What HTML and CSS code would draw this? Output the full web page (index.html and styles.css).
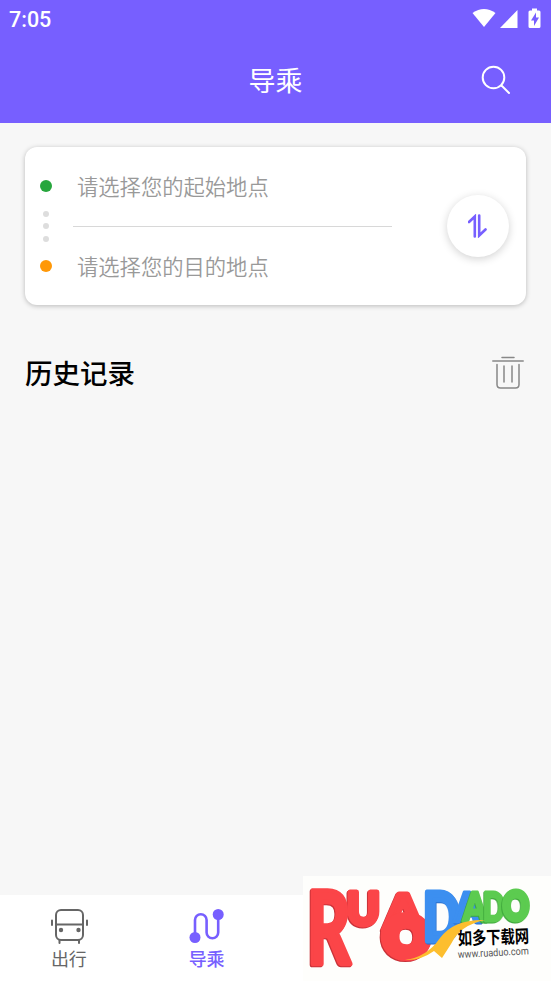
FILE: index.html
```html
<!DOCTYPE html>
<html lang="zh-CN">

<head>
  <meta charset="utf-8">
  <title>导乘</title>
  <link rel="stylesheet" href="styles.css">
</head>

<body>
  <header>
    <div class="status">
      <span>7:05</span>
      <svg class="status-icons" width="70" height="22" viewBox="0 0 70 22">
        <path d="M0.500 5Q12-3 23.500 5L12 19Z" />
        <path d="M45.500 2V20H28Z" />
        <path d="M60 0.500h5v2h2q1.500 0 1.500 1.500v14.500q0 1.500-1.500 1.500h-9q-1.500 0-1.500-1.500V4q0-1.500 1.500-1.500h2z" />
        <path class="bolt" d="M64 4.500l-5 8h3v5.500l5-8.500h-3z" />
      </svg>
    </div>
    <div class="title-bar">
      <h1>导乘</h1>
      <svg class="search" width="30" height="30" viewBox="0 0 30 30">
        <circle cx="12.500" cy="12.500" r="10.800" />
        <path d="M20.500 20.500l7.500 7.500" />
      </svg>
    </div>
  </header>

  <main>
    <form class="card">
      <div class="marks">
        <i class="dot start"></i>
        <i class="small"></i>
        <i class="small"></i>
        <i class="small"></i>
        <i class="dot end"></i>
      </div>
      <div class="places">
        <div class="place">请选择您的起始地点</div>
        <div class="place">请选择您的目的地点</div>
      </div>
      <button type="button" class="swap">
        <svg width="20" height="24" viewBox="0 0 20 24">
          <path d="M1 8L6.800 2.500v20M11.200 1.500v20L17.500 15.500" />
        </svg>
      </button>
    </form>

    <div class="history">
      <h2>历史记录</h2>
      <svg class="trash" width="32" height="34" viewBox="0 0 32 34">
        <path d="M10 1.500h12M0.800 5h30.400M5 8.500v20q0 3.500 3.500 3.500h15q3.500 0 3.500-3.500v-20M12 10v16M20 10v16" />
      </svg>
    </div>
  </main>

  <nav>
    <a class="tab">
      <svg width="38" height="36" viewBox="0 0 38 36">
        <rect x="6" y="2" width="27" height="30" rx="5" />
        <path d="M6 16.500h27M2 12.500v4.500M37 12.500v4.500M9.500 32v3M29 32v3" />
        <circle class="fill" cx="11" cy="22" r="2.200" />
        <circle class="fill" cx="28.500" cy="22" r="2.200" />
      </svg>
      <span>出行</span>
    </a>
    <a class="tab active">
      <svg width="38" height="36" viewBox="0 0 38 36">
        <path d="M7 29V12a5.800 5.800 0 0 1 11.600 0V24.500a5.800 5.800 0 0 0 11.600 0V7" />
        <circle class="fill" cx="7" cy="29.500" r="5.500" />
        <circle class="fill" cx="30.200" cy="6.500" r="5.500" />
      </svg>
      <span>导乘</span>
    </a>
  </nav>

  <div class="watermark">
    <svg width="248" height="105" viewBox="303 876 248 105">
      <g class="letters red">
        <text transform="translate(307 964) scale(.95 1.420)" font-size="71">R</text>
        <text class="heavy" transform="translate(347 925) scale(.96 1)" font-size="46">U</text>
        <text class="heavy" transform="translate(384 930) scale(1.090 1)" font-size="50">A</text>
        <text class="heaviest" transform="translate(384 956) scale(1.040 1)" font-size="53">O</text>
      </g>
      <g class="letters">
        <text class="blue heavy" transform="translate(423 941) scale(.72 1)" font-size="67">D</text>
        <text class="blue" transform="translate(454 922) scale(.9 1)" font-size="41">A</text>
        <text class="green" transform="translate(463 921) scale(.85 1)" font-size="40">A</text>
        <text class="green" transform="translate(483 921) scale(.72 1)" font-size="40">D</text>
        <text class="green heavy" transform="translate(503 920) scale(.82 1)" font-size="39">O</text>
      </g>
      <path class="swoosh" d="M405 960Q427 957 440 938Q454 919 485 920Q460 925 451 944L442 958L434 951Q420 961 405 960Z" />
      <text class="site" transform="translate(458 945) rotate(-2) scale(1 1.250)">如多下载网</text>
      <text class="url" transform="translate(458 958) rotate(-3)" textLength="71" lengthAdjust="spacingAndGlyphs">www.ruaduo.com</text>
    </svg>
  </div>
</body>

</html>
```
FILE: styles.css
```css
* {
  box-sizing: border-box;
}

body {
  margin: 0;
  height: 981px;
  display: flex;
  flex-direction: column;
  position: relative;
  overflow: hidden;
  background: #f7f7f7;
  font-family: Roboto, "Noto Sans CJK SC", sans-serif;
}

header {
  height: 123px;
  background: #775fff;
  color: white;
}

.status {
  height: 38px;
  padding: 0 9px;
  display: flex;
  justify-content: space-between;
  align-items: center;
  font-size: 21.500px;
  font-weight: 500;
}

.status-icons {
  fill: white;
}

.status-icons .bolt {
  fill: #775fff;
}

.title-bar {
  height: 84px;
  padding: 0 40px 0 70px;
  display: flex;
  align-items: center;
}

h1 {
  flex: 1;
  margin: -1px 0 0;
  text-align: center;
  font-size: 27px;
  font-weight: 400;
}

svg {
  display: block;
}

.search,
.swap svg,
.trash,
.tab svg {
  fill: none;
  stroke: currentColor;
  stroke-width: 2;
  stroke-linecap: round;
}

.card {
  height: 158px;
  margin: 24px 25px 0;
  padding: 0 17px 0 15px;
  display: flex;
  align-items: center;
  background: white;
  border-radius: 12px;
  box-shadow: 0 1px 5px rgba(0, 0, 0, 0.25);
}

.marks {
  width: 12px;
  display: flex;
  flex-direction: column;
  align-items: center;
  gap: 6.500px;
}

.dot {
  width: 12px;
  height: 12px;
  border-radius: 50%;
}

.start {
  margin-bottom: 12px;
  background: #27a63d;
}

.end {
  margin-top: 12px;
  background: #ff9808;
}

.small {
  width: 6px;
  height: 6px;
  border-radius: 50%;
  background: #ddd;
}

.places {
  width: 319px;
  margin: 0 auto 0 21px;
}

.place {
  height: 79px;
  padding-left: 4px;
  line-height: 81px;
  font-size: 21.300px;
  font-weight: 350;
  color: #999;
}

.place + .place {
  line-height: 81px;
  border-top: 1px solid #d8d8d8;
}

.swap {
  width: 62px;
  height: 62px;
  padding: 0;
  display: flex;
  align-items: center;
  justify-content: center;
  border: 0;
  border-radius: 50%;
  background: white;
  color: #775fff;
  box-shadow: 0 2px 8px rgba(0, 0, 0, 0.18);
}

.swap svg {
  stroke-width: 2.600;
}

.history {
  margin: 47px 27px 0 25px;
  display: flex;
  align-items: center;
  justify-content: space-between;
}

h2 {
  margin: 2px 0 -2px;
  font-size: 27.500px;
  font-weight: 500;
  line-height: 42px;
}

.trash {
  color: #888;
  stroke-width: 1.500;
}

nav {
  height: 86px;
  margin-top: auto;
  padding-top: 13px;
  display: flex;
  background: white;
}

.tab {
  width: 25%;
  display: flex;
  flex-direction: column;
  align-items: center;
  font-size: 18px;
  line-height: 31px;
  color: #666;
}

.tab .fill {
  fill: currentColor;
  stroke: none;
}

.active {
  color: #775fff;
  font-weight: 500;
}

.active svg {
  stroke-width: 2.600;
}

.watermark {
  position: absolute;
  right: 0;
  bottom: 0;
  background: #fefefc;
}

.letters {
  font-family: Lato, sans-serif;
  font-weight: 900;
  stroke-width: 3;
  stroke-linejoin: round;
}

.heavy {
  stroke-width: 5;
}

.heaviest {
  stroke-width: 10;
}

.red {
  fill: #fb4548;
  stroke: #fb4548;
  filter: drop-shadow(-1px 1px #c93238);
}

.blue {
  fill: #3c8ff0;
  stroke: #3c8ff0;
  filter: drop-shadow(1px 1px #286dca);
}

.green {
  fill: #5ccb50;
  stroke: #5ccb50;
  filter: drop-shadow(-1px 1px #3da63a);
}

.swoosh {
  fill: #fdbe2e;
}

.site {
  font-size: 14.300px;
  font-weight: 700;
}

.url {
  font-size: 10.500px;
  fill: #555;
}
```
